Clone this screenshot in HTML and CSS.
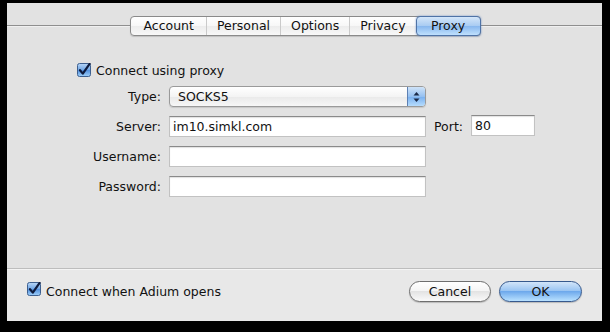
FILE: index.html
```html
<!DOCTYPE html>
<html lang="en">
<head>
  <meta charset="UTF-8">
  <title>Account settings - Proxy</title>
  <link rel="stylesheet" href="styles.css">
</head>
<body>
  <div class="sheet">
    <div class="pane">
      <div class="tabbar">
        <div class="tabs">
          <span class="tab">Account</span>
          <span class="tab">Personal</span>
          <span class="tab">Options</span>
          <span class="tab">Privacy</span>
          <span class="tab tab-active">Proxy</span>
        </div>
      </div>

      <div class="form">
        <label class="check-row check-proxy">
          <svg class="checkbox" width="14" height="14" viewBox="0 0 14 14">
            <defs>
              <linearGradient id="cbA" x1="0" y1="0" x2="0" y2="1">
                <stop offset="0" stop-color="#b9d6f6"/>
                <stop offset="0.5" stop-color="#6fa6e6"/>
                <stop offset="0.5" stop-color="#4f8ddc"/>
                <stop offset="1" stop-color="#9fd0fa"/>
              </linearGradient>
            </defs>
            <rect x="0.5" y="0.5" width="13" height="13" rx="2" fill="url(#cbA)" stroke="#3d5f8f"/>
            <path d="M3 7.2 L5.8 10.6 L12.6 0.8" fill="none" stroke="#0e1b3d" stroke-width="2.2" stroke-linecap="round" stroke-linejoin="round"/>
          </svg>
          Connect using proxy
        </label>

        <span class="label">Type:</span>
        <div class="popup">
          <span class="popup-value">SOCKS5</span>
          <span class="popup-arrows">
            <svg width="7" height="12" viewBox="0 0 7 12">
              <path d="M3.5 1 L6.5 4.5 L0.5 4.5 Z" fill="#1b2a48"/>
              <path d="M3.5 11 L6.5 7.5 L0.5 7.5 Z" fill="#1b2a48"/>
            </svg>
          </span>
        </div>
        <span></span>
        <span></span>

        <span class="label">Server:</span>
        <input class="field" type="text" value="im10.simkl.com">
        <span class="label">Port:</span>
        <input class="field field-port" type="text" value="80">

        <span class="label">Username:</span>
        <input class="field" type="text">
        <span></span>
        <span></span>

        <span class="label">Password:</span>
        <input class="field" type="password">
        <span></span>
        <span></span>
      </div>
    </div>

    <div class="footer">
      <label class="check-row check-open">
        <svg class="checkbox" width="14" height="14" viewBox="0 0 14 14">
          <defs>
            <linearGradient id="cbB" x1="0" y1="0" x2="0" y2="1">
              <stop offset="0" stop-color="#b9d6f6"/>
              <stop offset="0.5" stop-color="#6fa6e6"/>
              <stop offset="0.5" stop-color="#4f8ddc"/>
              <stop offset="1" stop-color="#9fd0fa"/>
            </linearGradient>
          </defs>
          <rect x="0.5" y="0.5" width="13" height="13" rx="2" fill="url(#cbB)" stroke="#3d5f8f"/>
          <path d="M3 7.2 L5.8 10.6 L12.6 0.8" fill="none" stroke="#0e1b3d" stroke-width="2.2" stroke-linecap="round" stroke-linejoin="round"/>
        </svg>
        Connect when Adium opens
      </label>
      <div class="buttons">
        <button class="button">Cancel</button>
        <button class="button button-default">OK</button>
      </div>
    </div>
  </div>
</body>
</html>
```

FILE: styles.css
```css
:root {
  --pane: #e2e2e2;
  --footer: #e8e8e8;
  --text: #111;
  --line: #8f8f8f;
}

body {
  margin: 0;
  background: #000;
  font-family: "DejaVu Sans", "Noto Sans", sans-serif;
  font-size: 12.5px;
  color: var(--text);
}

.sheet {
  width: 595px;
  height: 318px;
  margin: 3px 0 0 7px;
  display: flex;
  flex-direction: column;
}

.pane {
  height: 265px;
  background: var(--pane);
  border-bottom: 1px solid #bdbdbd;
}

/* tab strip sitting on a divider line */
.tabbar {
  margin-top: 13px;
  height: 20px;
  display: flex;
  justify-content: center;
  padding-left: 2px;
  background: linear-gradient(to bottom,
    transparent 9px, var(--line) 9px, var(--line) 10px,
    #f0f0f0 10px, #f0f0f0 11px, transparent 11px);
}

.tabs {
  display: flex;
  height: 20px;
  box-sizing: border-box;
  border: 1px solid #8a8a8a;
  border-radius: 4px;
  background: linear-gradient(#ffffff, #f7f7f7 50%, #ececec 50%, #f8f8f8);
  box-shadow: 0 1px 1px rgba(0, 0, 0, 0.15);
}

.tab {
  display: flex;
  align-items: center;
  justify-content: center;
  min-width: 43px;
  padding: 0 10px;
  border-left: 1px solid #cacaca;
  line-height: 18px;
}
.tab:first-child {
  border-left: none;
  padding: 0 12px;
  border-radius: 3px 0 0 3px;
}
.tab-active {
  margin: -1px -1px -1px 0;
  border: 1px solid #4f73a6;
  border-radius: 4px;
  background: linear-gradient(#d4e6f9, #a8cbf2 50%, #86b6ee 50%, #bfe0fd);
  box-shadow: 0 0 2px rgba(60, 110, 190, 0.7);
}

.form {
  margin: 27px 0 0 70px;
  display: grid;
  grid-template-columns: 84px 257px auto 64px;
  grid-auto-rows: 21px;
  grid-template-rows: 14px;
  justify-content: start;
  column-gap: 8px;
  row-gap: 9px;
  align-items: center;
}

.check-row {
  display: flex;
  align-items: center;
  gap: 5px;
  white-space: nowrap;
}
.check-proxy {
  grid-column: 1 / -1;
  height: 14px;
}

.label {
  text-align: right;
  white-space: nowrap;
}

.field {
  height: 21px;
  box-sizing: border-box;
  margin: 0;
  padding: 0 3px;
  border: 1px solid #c2c2c2;
  border-top-color: #8a8a8a;
  background: #fff;
  box-shadow: inset 0 1px 1px rgba(0, 0, 0, 0.12);
  font: inherit;
  font-size: 12.5px;
  color: var(--text);
  outline: none;
}
.field-port {
  width: 64px;
  margin-bottom: 3px;
}

.popup {
  display: flex;
  height: 21px;
  box-sizing: border-box;
  border: 1px solid #9a9a9a;
  border-radius: 4px;
  background: linear-gradient(#ffffff, #f4f4f4 50%, #e9e9e9 50%, #f7f7f7);
  box-shadow: 0 1px 1px rgba(0, 0, 0, 0.12);
  overflow: hidden;
}
.popup-value {
  flex: 1;
  padding-left: 8px;
  line-height: 19px;
}
.popup-arrows {
  width: 17px;
  display: flex;
  align-items: center;
  justify-content: center;
  border-left: 1px solid #5d80b3;
  background: linear-gradient(#cfe3f8, #95c0f1 50%, #76aeef 50%, #b6dcfd);
}

/* bottom bar */
.footer {
  flex: 1;
  background: var(--footer);
  border-top: 1px solid #f4f4f4;
  display: flex;
  justify-content: space-between;
  align-items: flex-start;
  padding: 11px 20px 0 20px;
}
.check-open {
  height: 21px;
}
.check-open .checkbox {
  margin-bottom: 5px;
}

.buttons {
  display: flex;
  gap: 8px;
}

.button {
  height: 21px;
  border: 1px solid #6e6e6e;
  border-radius: 11px;
  padding: 0;
  background: linear-gradient(#ffffff, #f4f4f4 50%, #e3e3e3 50%, #fafafa);
  font: inherit;
  font-size: 12.5px;
  color: var(--text);
  box-shadow: 0 1px 1px rgba(0, 0, 0, 0.2);
  width: 82px;
}
.button-default {
  width: 83px;
  border-color: #36598d;
  background: linear-gradient(#d2e5f9, #95c2f2 50%, #6ea9ec 50%, #b9e1ff);
}
```
